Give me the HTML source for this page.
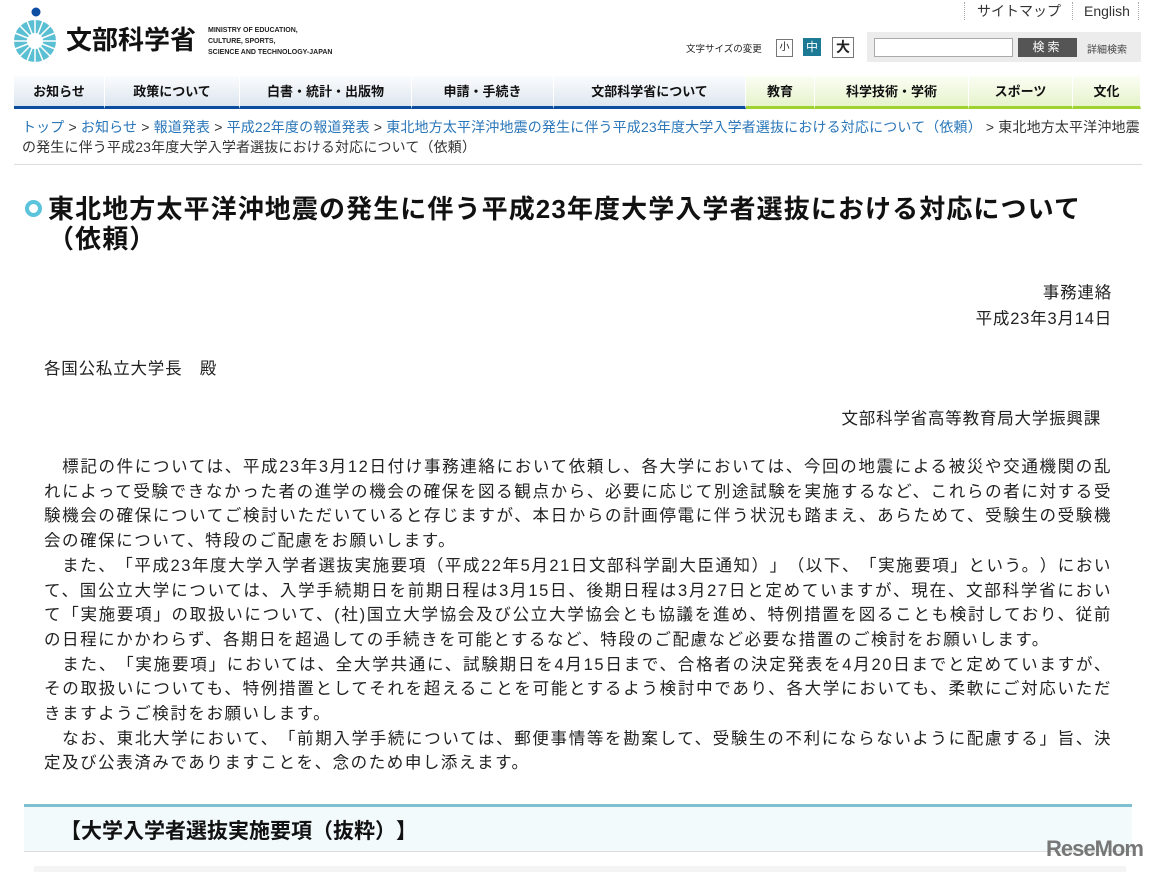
<!DOCTYPE html>
<html><head><meta charset="utf-8"><style>
*{text-spacing-trim:space-all}
body{margin:0;width:1155px;height:872px;overflow:hidden;background:#fff;font-family:"Liberation Sans","Noto Sans CJK JP",sans-serif;color:#222}
.abs{position:absolute}
.nav{position:absolute;top:76px;left:14px;height:33px;display:flex}
.nav div{height:30px;border-bottom:3px solid #0a4f9e;border-right:1px solid #fff;background:linear-gradient(#fafcfe,#dde6ef);font-size:13px;font-weight:bold;text-align:center;line-height:31px;color:#111}
.nav div.g{border-bottom-color:#9fd130;background:linear-gradient(#fbfef4,#e6f3cc)}
.bc{position:absolute;left:22px;top:117px;width:1126px;font-size:14px;letter-spacing:0.15px;line-height:20px;color:#333}
.bc a{color:#2a76b8;text-decoration:none}
p{margin:0}
.t{font-size:16.5px;letter-spacing:0.8px}
.body{position:absolute;left:44px;top:455px;width:1068px;line-height:24.7px;text-align:justify;color:#222}
</style></head><body>
<svg class="abs" style="left:13px;top:6px" width="46" height="58" viewBox="0 0 46 58">
<circle cx="23" cy="6" r="4.5" fill="#0d4ea3"/>
<circle cx="22" cy="35" r="21" fill="#5bbfd3"/>
<circle cx="22" cy="35" r="8" fill="#fff"/>
<g stroke="#fff" stroke-width="1.5">
<line x1="22" y1="14" x2="22" y2="56"/><line x1="1" y1="35" x2="43" y2="35"/>
<line x1="7" y1="20" x2="37" y2="50"/><line x1="37" y1="20" x2="7" y2="50"/>
<line x1="14" y1="15" x2="30" y2="55"/><line x1="30" y1="15" x2="14" y2="55"/>
<line x1="2" y1="27" x2="42" y2="43"/><line x1="42" y1="27" x2="2" y2="43"/>
</g></svg>
<div class="abs" style="left:66px;top:22px;font-size:26px;font-weight:bold;color:#111;line-height:36px">文部科学省</div>
<div class="abs" style="left:208px;top:25px;font-size:7px;font-weight:bold;line-height:11px;color:#222">MINISTRY OF EDUCATION,<br>CULTURE, SPORTS,<br>SCIENCE AND TECHNOLOGY-JAPAN</div>
<div class="abs" style="left:964px;top:2px;font-size:14px;color:#333;border-left:1px dotted #aaa;padding-left:12px;height:18px;line-height:18px">サイトマップ</div>
<div class="abs" style="left:1072px;top:2px;font-size:14px;color:#333;border-left:1px dotted #aaa;border-right:1px dotted #aaa;padding:0 8px 0 11px;height:18px;line-height:18px">English</div>
<div class="abs" style="left:686px;top:41px;font-size:9.5px;color:#222">文字サイズの変更</div>
<div class="abs" style="left:776px;top:39px;width:15px;height:16px;border:1px solid #777;font-size:10px;text-align:center;line-height:16px">小</div>
<div class="abs" style="left:803px;top:38px;width:18px;height:18px;background:#1c7a95;color:#fff;font-size:12px;text-align:center;line-height:18px">中</div>
<div class="abs" style="left:832px;top:37px;width:20px;height:19px;border:1px solid #777;font-size:14px;font-weight:bold;text-align:center;line-height:19px">大</div>
<div class="abs" style="left:867px;top:32px;width:274px;height:30px;background:#ececec"></div>
<div class="abs" style="left:874px;top:38px;width:137px;height:17px;background:#fff;border:1px solid #aaa"></div>
<div class="abs" style="left:1018px;top:38px;width:59px;height:19px;background:#555;color:#fff;font-size:12px;text-align:center;line-height:19px;letter-spacing:3px">検索</div>
<div class="abs" style="left:1087px;top:41px;font-size:10px;color:#444">詳細検索</div>
<div class="nav">
<div style="width:90px">お知らせ</div><div style="width:134px">政策について</div><div style="width:171px">白書・統計・出版物</div><div style="width:141px">申請・手続き</div><div style="width:191px">文部科学省について</div><div class="g" style="width:68px">教育</div><div class="g" style="width:153px">科学技術・学術</div><div class="g" style="width:103px">スポーツ</div><div class="g" style="width:67px">文化</div>
</div>
<div class="bc"><a>トップ</a> &gt; <a>お知らせ</a> &gt; <a>報道発表</a> &gt; <a>平成22年度の報道発表</a> &gt; <a>東北地方太平洋沖地震の発生に伴う平成23年度大学入学者選抜における対応について（依頼）</a> &gt; 東北地方太平洋沖地震の発生に伴う平成23年度大学入学者選抜における対応について（依頼）</div>
<div class="abs" style="left:14px;top:164px;width:1128px;height:1px;background:#ddd"></div>
<div class="abs" style="left:25px;top:200px;width:9px;height:9px;border:4px solid #5bc3dc;border-radius:50%"></div>
<div class="abs" style="left:48px;top:194px;width:1090px;font-size:26px;letter-spacing:1.1px;font-weight:bold;line-height:30px;color:#111">東北地方太平洋沖地震の発生に伴う平成23年度大学入学者選抜における対応について<br>（依頼）</div>
<div class="abs t" style="right:43px;top:280px;line-height:26px;text-align:right">事務連絡<br>平成23年3月14日</div>
<div class="abs t" style="left:44px;top:355px">各国公私立大学長　殿</div>
<div class="abs t" style="right:54px;top:405px">文部科学省高等教育局大学振興課</div>
<div class="body t" style="letter-spacing:1.55px">
<p>　標記の件については、平成23年3月12日付け事務連絡において依頼し、各大学においては、今回の地震による被災や交通機関の乱れによって受験できなかった者の進学の機会の確保を図る観点から、必要に応じて別途試験を実施するなど、これらの者に対する受験機会の確保についてご検討いただいていると存じますが、本日からの計画停電に伴う状況も踏まえ、あらためて、受験生の受験機会の確保について、特段のご配慮をお願いします。</p>
<p>　また、「平成23年度大学入学者選抜実施要項（平成22年5月21日文部科学副大臣通知）」（以下、「実施要項」という。）において、国公立大学については、入学手続期日を前期日程は3月15日、後期日程は3月27日と定めていますが、現在、文部科学省において「実施要項」の取扱いについて、(社)国立大学協会及び公立大学協会とも協議を進め、特例措置を図ることも検討しており、従前の日程にかかわらず、各期日を超過しての手続きを可能とするなど、特段のご配慮など必要な措置のご検討をお願いします。</p>
<p>　また、「実施要項」においては、全大学共通に、試験期日を4月15日まで、合格者の決定発表を4月20日までと定めていますが、その取扱いについても、特例措置としてそれを超えることを可能とするよう検討中であり、各大学においても、柔軟にご対応いただきますようご検討をお願いします。</p>
<p>　なお、東北大学において、「前期入学手続については、郵便事情等を勘案して、受験生の不利にならないように配慮する」旨、決定及び公表済みでありますことを、念のため申し添えます。</p>
</div>
<div class="abs" style="left:24px;top:804px;width:1108px;height:44px;border-top:3px solid #7fbfd2;border-bottom:1px solid #ddd;background:#f3fafc"></div>
<div class="abs" style="left:60px;top:815px;font-size:21px;font-weight:bold;color:#111">【大学入学者選抜実施要項（抜粋）】</div>
<div class="abs" style="left:34px;top:866px;width:1092px;height:6px;background:#f4f4f4"></div>
<div class="abs" style="left:1046px;top:836px;font-size:22px;font-weight:bold;color:#777;letter-spacing:-1px">ReseMom</div>
</body></html>
